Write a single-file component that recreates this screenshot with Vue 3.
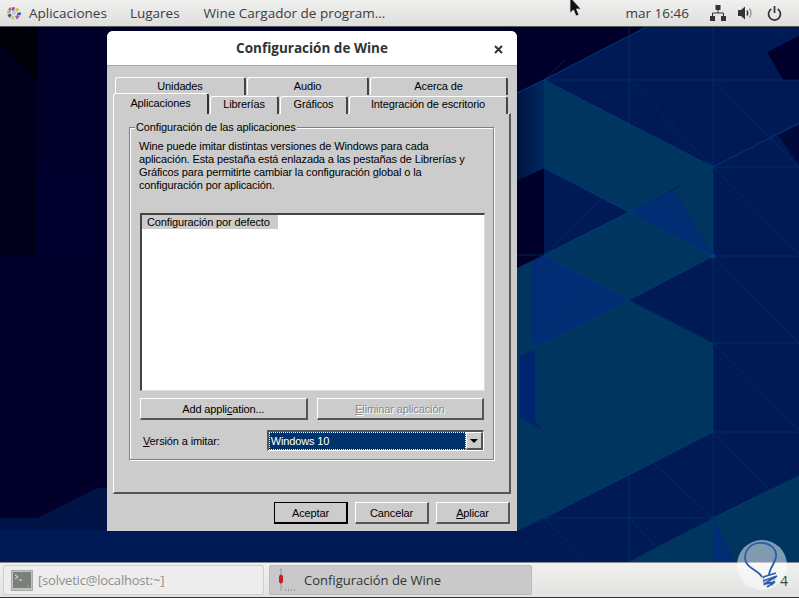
<script setup>
const tabsTop = [
  { label: 'Unidades', w: 131 },
  { label: 'Audio', w: 122 },
  { label: 'Acerca de', w: 138 },
]
const tabsBottom = [
  { label: 'Librerías', w: 69 },
  { label: 'Gráficos', w: 68 },
  { label: 'Integración de escritorio', w: 159 },
]
</script>

<template>
  <div class="desktop">
    <svg class="wall" width="799" height="598" viewBox="0 0 799 598">
      <defs>
        <linearGradient id="fade" x1="0" x2="1" y1="0" y2="0">
          <stop offset="0" stop-color="#00123f" />
          <stop offset="1" stop-color="#002a60" />
        </linearGradient>
      </defs>
      <rect width="799" height="598" fill="#00002b" />
      <rect x="0" y="27" width="37" height="229" fill="#00001c" />
      <polygon points="0,27 37,27 37,81 0,44" fill="#000008" />
      <rect x="37" y="168" width="62" height="88" fill="#00002f" />
      <polygon points="0,518 37,518 97,488 107,488 107,562 0,562" fill="#001347" />
      <polygon points="0,530 799,530 799,562 0,562" fill="#001a55" />
      <polygon points="517,93 646,27 799,27 799,562 517,562" fill="#001a55" />
      <polygon points="767,52 799,36 799,80 783,80" fill="#00002b" />
      <polygon points="778,135 799,125 799,165" fill="#000a3a" />
      <polygon points="517,180 544,168 544,255 517,268" fill="#00002b" />
      <polygon points="517,93 544,80 544,168 517,181" fill="url(#fade)" />
      <polygon points="544,80 713,167 629,212 544,168" fill="#00355f" />
      <polygon points="673,190 713,167 713,256" fill="#00355f" />
      <polygon points="673,190 713,256 629,212" fill="#002d73" />
      <polygon points="544,255 629,212 713,256 629,300" fill="#00355f" />
      <polygon points="517,268 544,255 544,343 517,343" fill="#00355f" />
      <polygon points="531,262 544,255 629,300 544,343 531,343" fill="#002d73" />
      <polygon points="629,300 713,343 713,432 544,518 517,531 517,343 544,343" fill="#00355f" />
      <polygon points="520,357 535,349 535,420 542,430 520,417" fill="#002470" />
      <polygon points="713,518 799,476 799,562 735,562" fill="#00355f" />
      <polygon points="713,518 735,562 713,562" fill="#002d73" />
      <polygon points="713,518 713,562 628,562" fill="#00355f" />
      <g stroke="#003a78" stroke-width="1" fill="none">
        <path d="M544 80 L646 27 M517 93 L544 80 L713 167 L799 123" />
        <path d="M544 80 H799 M629 80 L713 167 L799 254 M713 80 L799 167 M713 27 V562" opacity=".55" />
        <path d="M713 167 H799 M713 256 H799 M713 343 H799 M713 432 H799 M544 518 H713" opacity=".55" />
        <path d="M713 256 L799 343 M713 343 L799 430 M713 432 L770 490 M713 518 L650 460 M629 518 L670 562 M544 518 L590 562" opacity=".55" />
        <path d="M629 27 V135 M629 212 V300 M629 472 V562 M544 80 L565 60 M517 255 H713" opacity=".55" />
        <path d="M544 255 L629 212 L713 167 M544 255 L629 300 L713 256 M544 343 L629 300 M544 168 L629 212 L713 256 M713 432 L544 518 M713 518 L799 476" />
        <path d="M544 343 L600 292 M629 347 L600 375 M629 347 L713 432 M544 255 L620 180" opacity=".45" />
      </g>
      <circle cx="713" cy="256" r="2.6" fill="#003a86" />
    </svg>

    <header class="topbar">
      <div class="logo">
        <svg width="14" height="14" viewBox="0 0 14 14">
          <circle cx="7" cy="7" r="2.200" fill="#c9c9d6" />
          <path d="M5 1l3 .5-1 3.500-2.500-1z" fill="#8c5a9c" />
          <path d="M9 1.500l3.500 2-3 2.500-1-2z" fill="#d8b84a" />
          <path d="M13.500 6l.5 3-3.500.5-.5-2.500z" fill="#3a5aa8" />
          <path d="M12.500 10.500l-2.500 3-2-3 2-1.500z" fill="#9a5aa8" />
          <path d="M7 13.800l-3-.8 1-3.500 2 1z" fill="#d8c04a" />
          <path d="M2.500 12l-2-3 3-1.500 1 2z" fill="#3a4ea0" />
          <path d="M.3 7.500V4.500l3.500.5-.5 2z" fill="#d8a43a" />
          <path d="M1.200 3.500l2-2.500 1.500 3-2 1z" fill="#9a5aa8" />
        </svg>
      </div>
      <span class="menu m1">Aplicaciones</span>
      <span class="menu m2">Lugares</span>
      <span class="menu">Wine Cargador de program...</span>
      <span class="spacer"></span>
      <span class="menu clock">mar 16:46</span>
      <svg class="ic-net" width="16" height="16" viewBox="0 0 16 16">
        <path d="M5.500 0h5v5h-5zM0 11h5v5H0zM11 11h5v5h-5z" fill="#333" />
        <path d="M8 5v3M2.500 11V8h11v3" stroke="#333" fill="none" />
      </svg>
      <svg class="ic-vol" width="16" height="16" viewBox="0 0 16 16">
        <path d="M0 5h3l4-3.500v13L3 11H0z" fill="#333" />
        <path d="M9 5.500q1.500 2.500 0 5" stroke="#333" stroke-width="1.500" fill="none" />
        <path d="M11.500 3.500q3 4.500 0 9" stroke="#999" stroke-width="1.500" fill="none" />
      </svg>
      <svg class="ic-pow" width="15" height="15" viewBox="0 0 15 15">
        <path d="M4.300 3a6 6 0 1 0 6.400 0" stroke="#333" stroke-width="1.700" fill="none" />
        <path d="M7.500 0v7" stroke="#333" stroke-width="1.700" />
      </svg>
    </header>

    <main class="middle">
      <section class="dialog">
        <div class="titlebar">
          <span class="title">Configuración de Wine</span>
          <svg class="close" width="9" height="9" viewBox="0 0 9 9">
            <path d="M1 1l7 7M8 1L1 8" stroke="#2e3436" stroke-width="2" />
          </svg>
        </div>
        <div class="client">
          <div class="tabrow top">
            <div v-for="t in tabsTop" :key="t.label" class="tab" :style="{ width: t.w + 'px' }">{{ t.label }}</div>
          </div>
          <div class="tabrow bottom">
            <div class="tab active">Aplicaciones</div>
            <div v-for="t in tabsBottom" :key="t.label" class="tab" :style="{ width: t.w + 'px' }">{{ t.label }}</div>
          </div>
          <div class="page">
            <fieldset class="group">
              <legend>Configuración de las aplicaciones</legend>
              <p class="intro">Wine puede imitar distintas versiones de Windows para cada<br />aplicación. Esta pestaña está enlazada a las pestañas de Librerías y<br />Gráficos para permitirte cambiar la configuración global o la<br />configuración por aplicación.</p>
              <div class="list">
                <div class="item">Configuración por defecto</div>
              </div>
              <div class="actions">
                <button class="btn">Add appli<u>c</u>ation...</button>
                <button class="btn disabled"><u>E</u>liminar aplicación</button>
              </div>
              <div class="version">
                <label><u>V</u>ersión a imitar:</label>
                <div class="combo">
                  <div class="value"><span>Windows 10</span></div>
                  <div class="drop"><i></i></div>
                </div>
              </div>
            </fieldset>
          </div>
          <div class="footer">
            <button class="btn default">Aceptar</button>
            <button class="btn">Cancelar</button>
            <button class="btn"><u>A</u>plicar</button>
          </div>
        </div>
      </section>
    </main>

    <footer class="panel">
      <div class="task first">
        <svg width="22" height="21" viewBox="0 0 22 21">
          <rect x=".5" y=".5" width="21" height="20" fill="#bfc2bf" stroke="#a8aaa8" />
          <rect x="2" y="2" width="18" height="16" fill="#7c807c" />
          <path d="M4 5l3 2-3 2" stroke="#e8e8e8" fill="none" />
          <path d="M8 10h3" stroke="#e8e8e8" />
          <path d="M16 16h2" stroke="#aaa" />
        </svg>
        <span class="solv">[solvetic@localhost:~]</span>
      </div>
      <div class="task current">
        <svg width="22" height="28" viewBox="0 0 22 28">
          <path d="M7 2v23" stroke="#a8a8a8" stroke-width="1.500" />
          <path d="M5 10q2-3 4 0l0 6q-2 3-4 0z" fill="#c4202a" />
          <path d="M11 24h1M14 24h1M17 24h1M20 24h1" stroke="#b58a8a" stroke-width="2" />
        </svg>
        <span>Configuración de Wine</span>
      </div>
      <span class="spacer"></span>
      <span class="pageno">1 / 4</span>
    </footer>

    <div class="bulb">
      <svg width="50" height="50" viewBox="0 0 50 50">
        <path d="M25 37C22 30 8 28 8 18 8 8 16 2 26 3c9 1 14 7 13 14-1 7-7 11-7 19" fill="none" stroke="#2a5fb0" stroke-width="1.800" />
        <path d="M26 37l13-4M26 41l14-5-13 8 11-2-8 5" fill="none" stroke="#2a5fb0" stroke-width="1.800" />
      </svg>
    </div>

    <svg class="cursor" width="14" height="18" viewBox="0 0 14 18">
      <path d="M1 -3V13L4.500 10 7 16l3-1-2.500-6H12z" fill="#111" stroke="#ddd" stroke-width=".8" />
    </svg>
  </div>
</template>

<style scoped>
.desktop {
  position: relative;
  width: 799px;
  height: 598px;
  overflow: hidden;
  display: flex;
  flex-direction: column;
  background: #00002b;
}
.wall { position: absolute; left: 0; top: 0; }
.spacer { flex: 1; }

.topbar {
  position: relative;
  height: 26px;
  flex: none;
  display: flex;
  align-items: center;
  background: linear-gradient(#f0f0ef, #dededd);
  border-bottom: 1px solid #55585a;
  font: 13.500px "Open Sans", sans-serif;
  color: #3a3d3e;
}
.logo { margin-left: 7px; width: 15px; height: 14px; margin-right: 7px; }
.menu { white-space: nowrap; }
.m1 { margin-right: 23px; }
.m2 { margin-right: 24px; }
.clock { margin-right: 21px; }
.ic-net { margin-right: 12px; }
.ic-vol { margin-right: 13px; }
.ic-pow { margin-right: 17px; }

.middle {
  position: relative;
  flex: 1;
  min-height: 0;
  padding: 4px 0 0 107px;
}
.dialog {
  width: 410px;
  height: 500px;
  border-radius: 6px 6px 0 0;
  overflow: hidden;
  display: flex;
  flex-direction: column;
  background: #cccccc;
}
.titlebar {
  height: 34px;
  flex: none;
  background: #fff;
  border-bottom: 1px solid #a8a8a8;
  display: flex;
  align-items: center;
  justify-content: center;
  position: relative;
  font: 700 13.500px "Open Sans", sans-serif;
  color: #2e3436;
}
.close { position: absolute; right: 14px; top: 14px; }
.client {
  flex: 1;
  display: flex;
  flex-direction: column;
  padding: 11px 6px 0 6px;
  font: 11px "Liberation Sans", sans-serif;
  letter-spacing: -.13px;
  color: #000;
}
.tabrow { display: flex; align-items: flex-end; }
.tabrow.top { height: 18px; padding-left: 2px; gap: 1px; }
.tabrow.bottom { height: 19px; gap: 1px; position: relative; margin-bottom: -1px; }
.tab {
  height: 18px;
  flex: none;
  display: flex;
  align-items: center;
  justify-content: center;
  background: #ccc;
  border-top: 1px solid #fff;
  border-left: 1px solid #fff;
  border-right: 2px solid #444;
  border-radius: 3px 3px 0 0;
  box-sizing: border-box;
  padding-bottom: 2px;
}
.tabrow.bottom .tab { padding-bottom: 4px; }
.tabrow.bottom .tab.active {
  width: 96px;
  height: 21px;
  padding-bottom: 3px;
  position: relative;
  z-index: 2;
  border-right-color: #333;
}
.page {
  height: 381px;
  box-sizing: border-box;
  width: 398px;
  border-top: 1px solid #fff;
  border-left: 1px solid #fff;
  border-right: 2px solid #555;
  border-bottom: 2px solid #555;
  padding: 7px 0 0 15px;
}
.group {
  margin: 0;
  padding: 0 9px 0 10px;
  width: 365px;
  height: 339px;
  box-sizing: border-box;
  border: 1px solid #808080;
  box-shadow: inset 1px 1px #fff, 1px 1px #fff;
  min-width: 0;
}
legend {
  padding: 0 1px;
  margin-left: -5px;
  background: #ccc;
  line-height: 13px;
}
.intro {
  margin: 0 0 0 -1px;
  padding-top: 6px;
  line-height: 13px;
  height: 73px;
  white-space: nowrap;
}
.list {
  width: 345px;
  height: 178px;
  box-sizing: border-box;
  background: #fff;
  border-top: 2px solid #444;
  border-left: 2px solid #444;
  border-right: 1px solid #ddd;
  border-bottom: 1px solid #ddd;
}
.item {
  width: 131px;
  height: 14px;
  line-height: 14px;
  padding-left: 5px;
  background: #ccc;
}
.actions {
  display: flex;
  gap: 9px;
  margin-top: 7px;
}
.btn {
  appearance: none;
  width: 168px;
  height: 22px;
  padding: 0;
  margin: 0;
  font: inherit;
  letter-spacing: inherit;
  color: #000;
  background: #ccc;
  border-top: 1px solid #fff;
  border-left: 1px solid #fff;
  border-right: 2px solid #555;
  border-bottom: 2px solid #555;
  box-sizing: border-box;
}
.btn.disabled { color: #888; text-shadow: 1px 1px #fff; }
.version {
  display: flex;
  align-items: center;
  margin-top: 10px;
  margin-left: 3px;
}
.version label { width: 124px; }
.combo {
  width: 218px;
  height: 21px;
  box-sizing: border-box;
  display: flex;
  border-top: 2px solid #555;
  border-left: 2px solid #555;
  border-right: 1px solid #fff;
  border-bottom: 1px solid #fff;
  background: #fff;
}
.value {
  flex: 1;
  background: #00336b;
  color: #fff;
  border: 1px dotted #fff;
  display: flex;
  align-items: center;
  padding-left: 1px;
}
.drop {
  width: 17px;
  box-sizing: border-box;
  background: #ccc;
  border-top: 1px solid #fff;
  border-left: 1px solid #fff;
  border-right: 2px solid #555;
  border-bottom: 2px solid #555;
  display: flex;
  align-items: center;
  justify-content: center;
}
.drop i {
  width: 0;
  height: 0;
  border-left: 4px solid transparent;
  border-right: 4px solid transparent;
  border-top: 4px solid #000;
}
.footer {
  display: flex;
  justify-content: flex-end;
  gap: 7px;
  margin-top: 8px;
  padding-right: 1px;
}
.footer .btn { width: 74px; }
.btn.default {
  outline: 1px solid #000;
  outline-offset: -1px;
  border-right: 2px solid #000;
  border-bottom: 2px solid #000;
}

.panel {
  position: relative;
  height: 36px;
  flex: none;
  box-sizing: border-box;
  display: flex;
  align-items: center;
  gap: 5px;
  padding: 3px 0 3px 3px;
  background: linear-gradient(#f0f0ef, #e2e2e1);
  border-top: 1px solid #889;
  border-bottom: 1px solid #333;
  font: 13px "Open Sans", sans-serif;
}
.task {
  width: 263px;
  height: 30px;
  box-sizing: border-box;
  flex: none;
  display: flex;
  align-items: center;
  border: 1px solid #d0d0d0;
  border-radius: 2px;
  background: #ededed;
  color: #8d8f8f;
  padding-left: 7px;
  gap: 5px;
}
.task.first { width: 261px; }
.solv { letter-spacing: -.2px; }
.task.current {
  background: #c9c9c9;
  color: #333;
  border-color: #bbb;
  gap: 8px;
  padding-left: 4px;
}
.task svg { flex: none; }
.pageno { margin-right: 11px; color: #444; font-size: 14px; position: relative; }

.bulb {
  position: absolute;
  left: 737px;
  top: 540px;
  width: 50px;
  height: 50px;
  border-radius: 50%;
  background: rgba(255, 255, 255, .5);
}
.cursor { position: absolute; left: 569px; top: 0; }
</style>
